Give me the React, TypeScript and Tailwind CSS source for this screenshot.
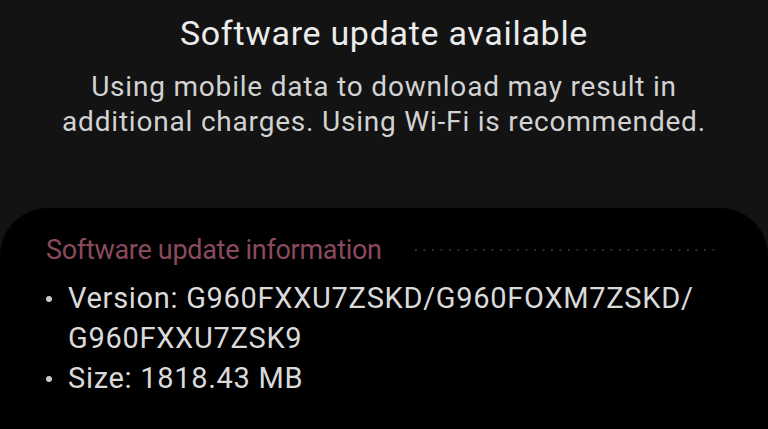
export default function App() {
  const fontStack = { fontFamily: "Roboto, 'Noto Sans', sans-serif" };
  return (
    <div
      className="flex h-[429px] w-[768px] flex-col overflow-hidden bg-[#131313]"
      style={fontStack}
    >
      {/* Header */}
      <div className="flex flex-col items-center px-4 pt-[13px]">
        <h1 className="text-[34px] leading-[40px] tracking-[0.7px] text-[#ececec]">
          Software update available
        </h1>
        <p className="mt-[16px] text-center text-[28px] leading-[35px] tracking-[0.8px] text-[#d2d2d2]">
          Using mobile data to download may result in
          <br />
          additional charges. Using Wi-Fi is recommended.
        </p>
      </div>

      {/* Info card */}
      <div className="mt-[69px] flex-1 rounded-t-[48px] bg-black pl-[46px] pr-[50px] pt-[25px]">
        <div className="flex items-center gap-[33px]">
          <h2 className="shrink-0 text-[27px] leading-[34px] tracking-[-0.3px] text-[#8a4a5d]">
            Software update information
          </h2>
          <div className="h-[2px] flex-1 bg-[linear-gradient(to_right,#303030_2px,transparent_2px)] bg-[length:8.5px_2px] bg-repeat-x" />
        </div>
        <ul className="mt-[11px] text-[29px] leading-[40px] tracking-[0.7px] text-[#dadada]">
          <li className="flex items-start">
            <span className="mt-[18px] mr-[16px] h-[6px] w-[6px] shrink-0 rounded-full bg-[#c8c8c8]" />
            <span>
              Version: G960FXXU7ZSKD/G960FOXM7ZSKD/
              <br />
              G960FXXU7ZSK9
            </span>
          </li>
          <li className="flex items-start">
            <span className="mt-[18px] mr-[16px] h-[6px] w-[6px] shrink-0 rounded-full bg-[#c8c8c8]" />
            <span>Size: 1818.43 MB</span>
          </li>
        </ul>
      </div>
    </div>
  );
}
